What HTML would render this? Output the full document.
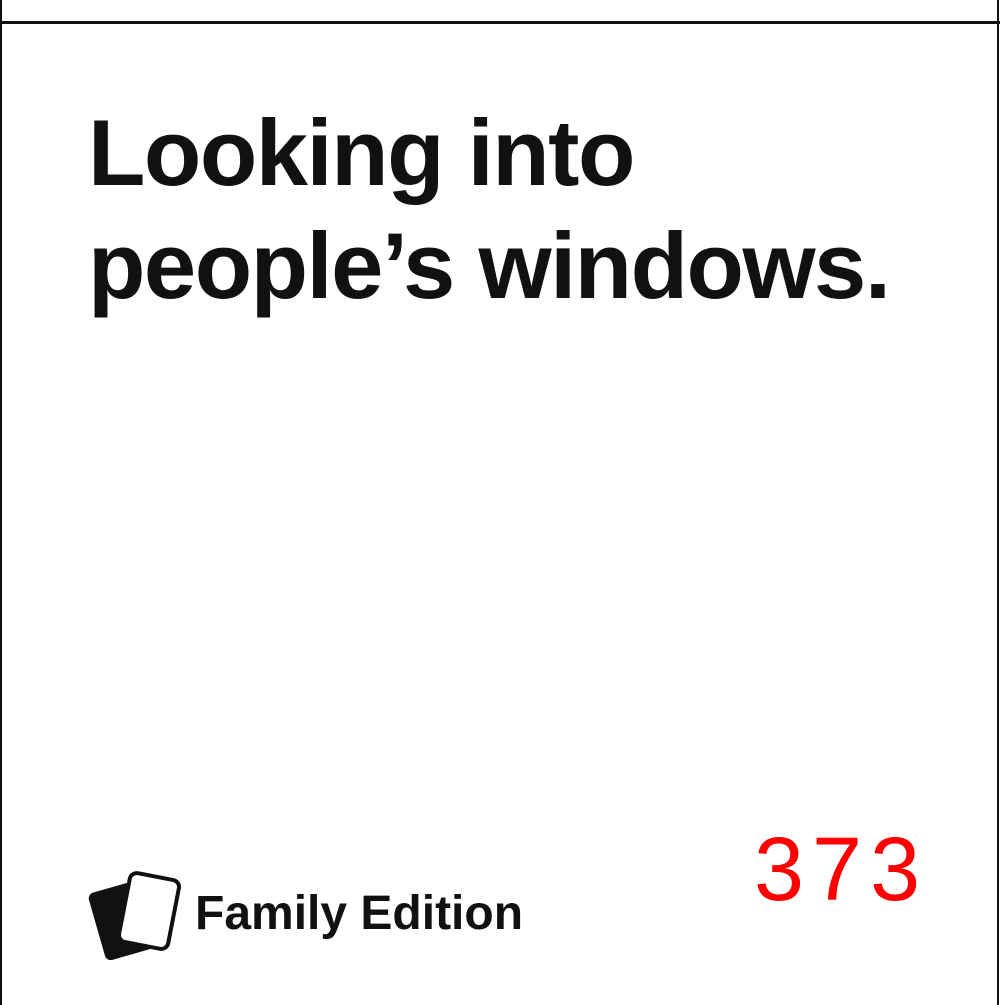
<!DOCTYPE html>
<html><head><style>
html,body{margin:0;padding:0;background:#fff;}
body{width:1000px;height:1005px;position:relative;overflow:hidden;font-family:"Liberation Sans",sans-serif;}
.l{position:absolute;left:0;top:0;width:2px;height:1005px;background:#111;}
.r{position:absolute;left:997px;top:0;width:2px;height:1005px;background:#111;}
.t{position:absolute;left:0;top:21px;width:1000px;height:3px;background:#111;}
h1{position:absolute;left:88px;top:96px;margin:0;font-size:94px;line-height:113px;font-weight:bold;color:#111;letter-spacing:-1.5px;white-space:nowrap;}
.fe{position:absolute;left:195px;top:884px;font-size:48px;font-weight:bold;color:#111;letter-spacing:0px;line-height:60px;}
.n{position:absolute;left:754px;top:820px;font-size:90px;color:#f00;line-height:100px;letter-spacing:8px;}
svg{position:absolute;left:86px;top:868px;}
</style></head><body>
<div class="l"></div><div class="r"></div><div class="t"></div>
<h1>Looking into<br>people’s windows.</h1>
<svg width="100" height="95" viewBox="0 0 100 95">
<rect x="10" y="18" width="50" height="70" rx="6" transform="rotate(-16 35 53)" fill="#111"/>
<rect x="38" y="8" width="50" height="70" rx="7" transform="rotate(11 63 43)" fill="#fff" stroke="#111" stroke-width="4"/>
</svg>
<div class="fe">Family Edition</div>
<div class="n">373</div>
</body></html>
